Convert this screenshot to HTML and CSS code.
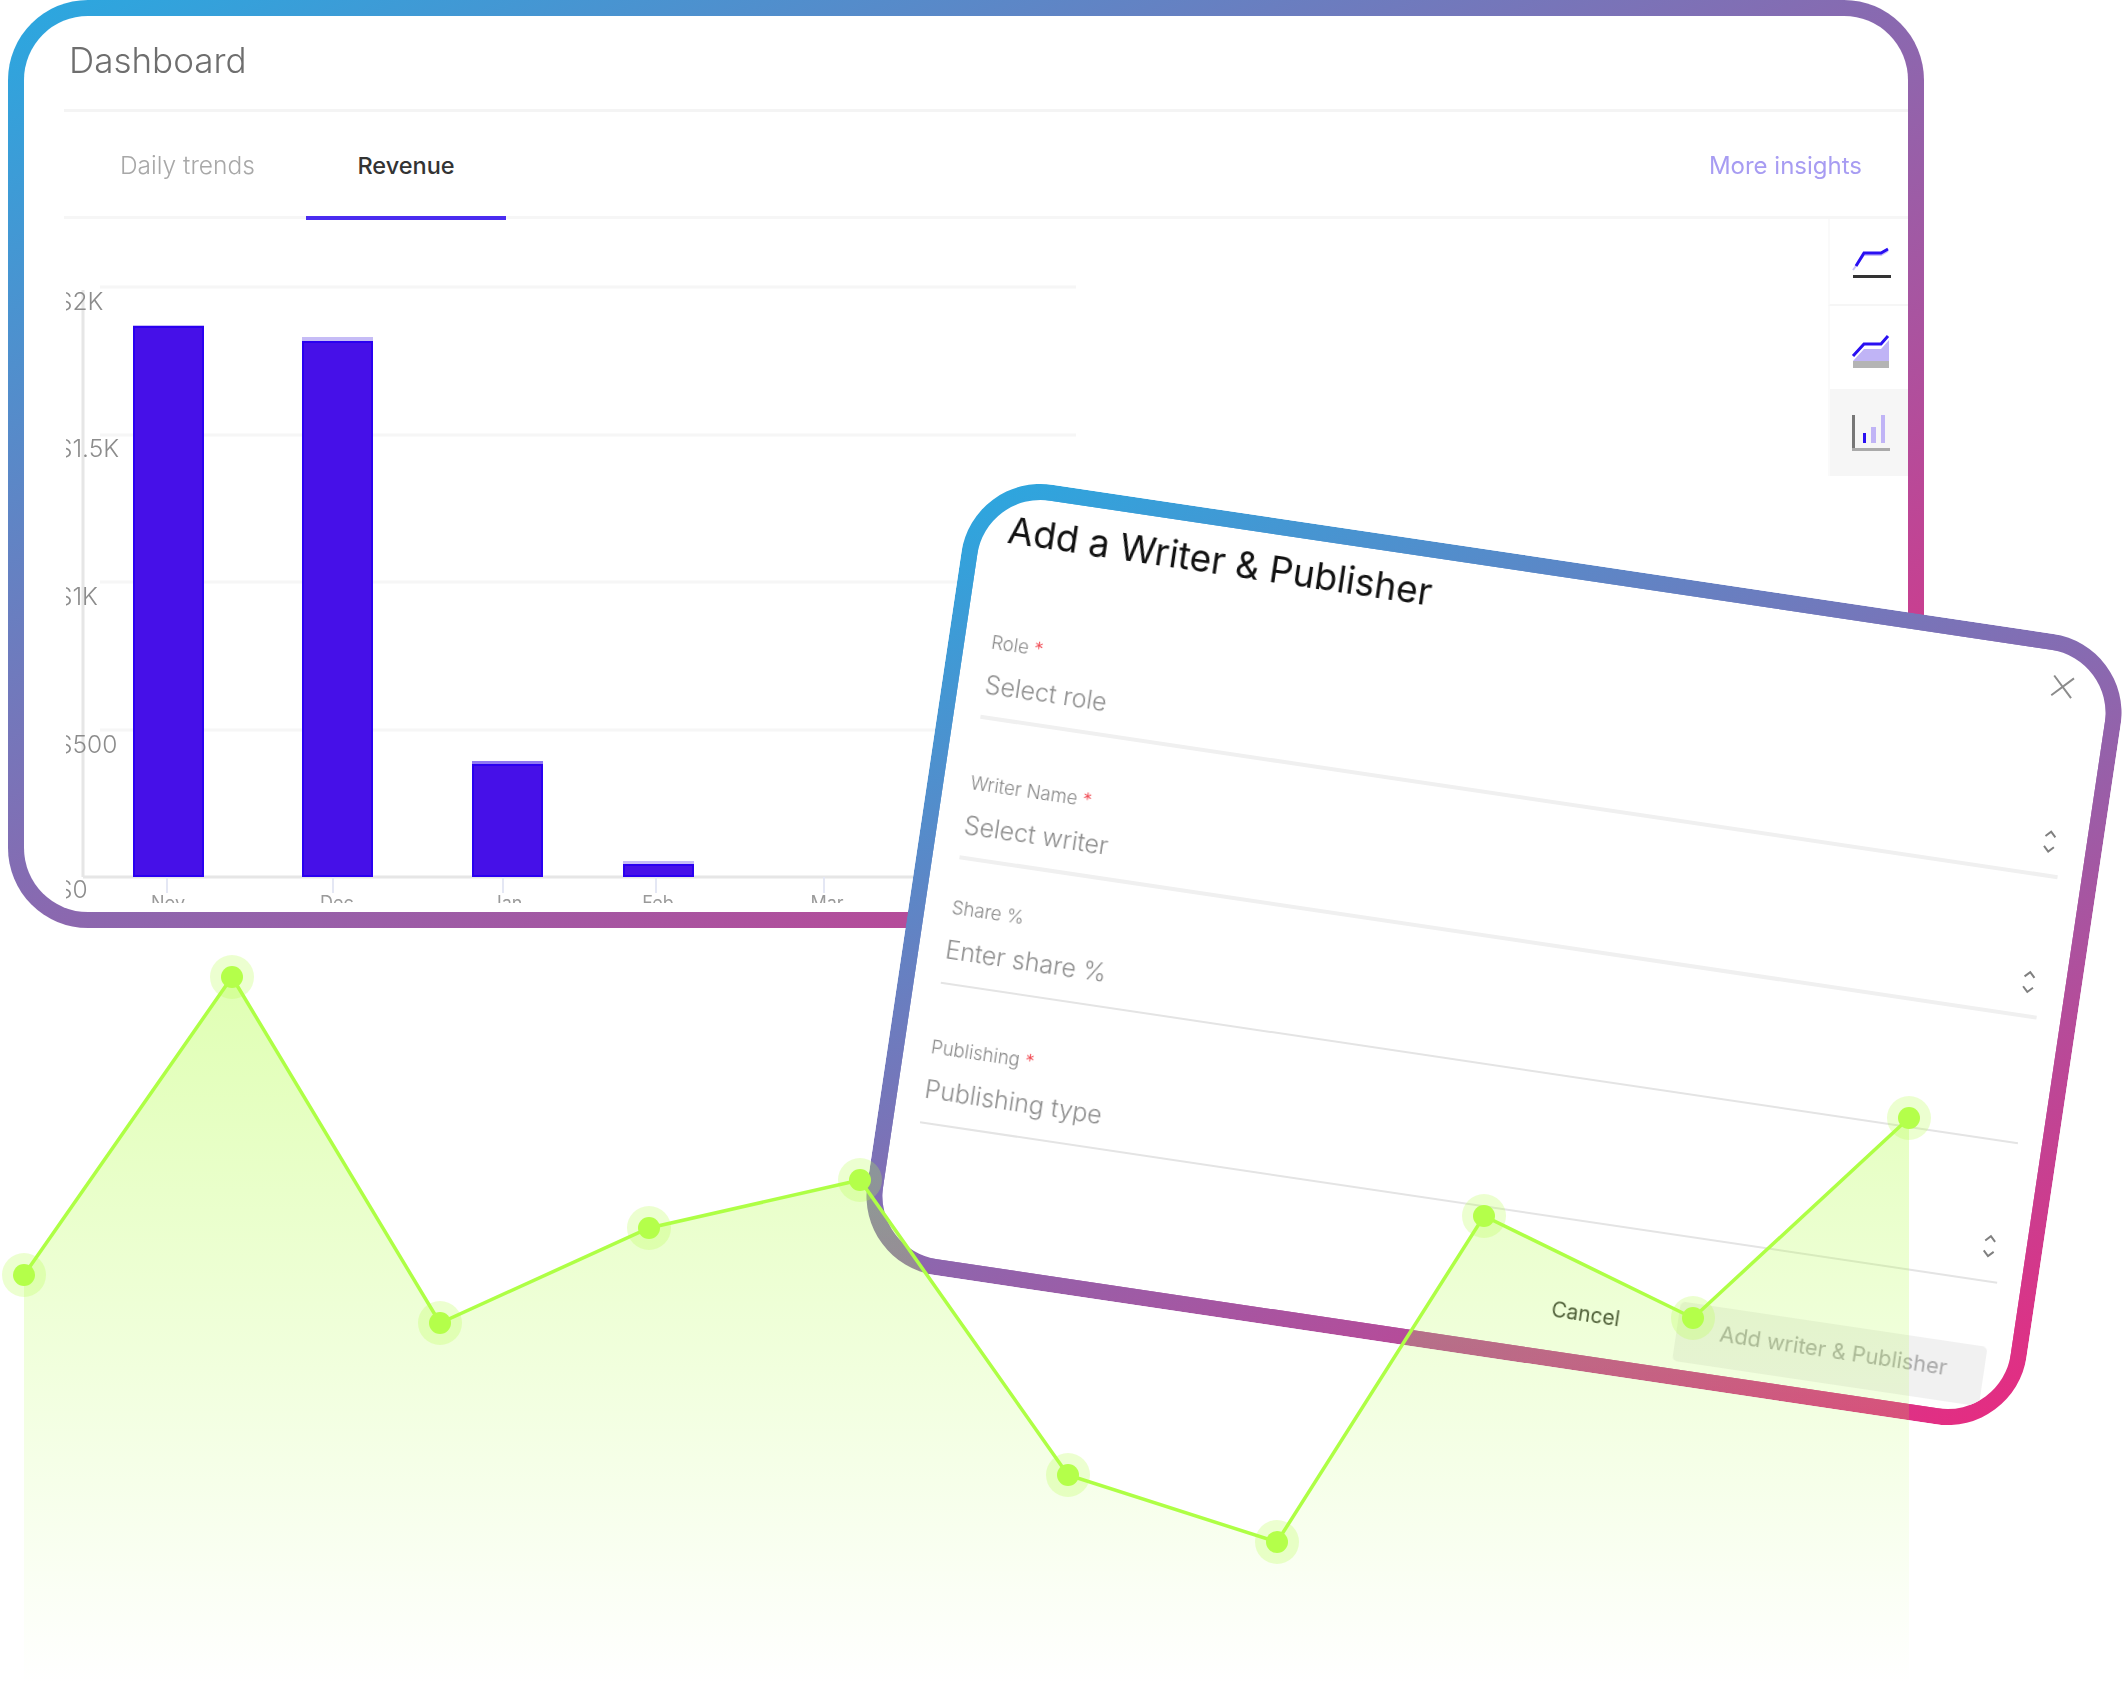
FILE: index.html
```html
<!DOCTYPE html>
<html lang="en">
<head>
<meta charset="utf-8">
<title>Dashboard</title>
<link rel="stylesheet" href="styles.css">
</head>
<body>
<main class="stage">
  <section class="card">
    <header class="card-head"><h1 class="card-title">Dashboard</h1></header>
    <nav class="tabs">
      <a class="tab tab-daily">Daily trends</a>
      <a class="tab tab-active">Revenue</a>
      <a class="tab-link">More insights</a>
    </nav>
    <div class="card-body">
      <svg class="chart" width="1804" height="693" viewBox="24 219 1804 693">
        <defs>
          <clipPath id="ylabels"><rect x="66" y="219" width="100" height="694"/></clipPath>
          <clipPath id="xlabels"><rect x="64" y="880" width="1100" height="23"/></clipPath>
        </defs>
        <g class="grid">
          <line x1="100" y1="287" x2="1076" y2="287"/>
          <line x1="100" y1="435" x2="1076" y2="435"/>
          <line x1="100" y1="582" x2="1076" y2="582"/>
          <line x1="100" y1="730" x2="1076" y2="730"/>
        </g>
        <line class="axis" x1="83" y1="290" x2="83" y2="877"/>
        <line class="axis" x1="83" y1="877" x2="1076" y2="877"/>
        <g class="ticks">
          <line x1="167" y1="877" x2="167" y2="893"/>
          <line x1="333" y1="877" x2="333" y2="893"/>
          <line x1="503" y1="877" x2="503" y2="893"/>
          <line x1="656" y1="877" x2="656" y2="893"/>
          <line x1="824" y1="877" x2="824" y2="893"/>
        </g>
        <g clip-path="url(#ylabels)" class="ylabel">
          <text x="57" y="310">$2K</text>
          <text x="57" y="457">$1.5K</text>
          <text x="57" y="605">$1K</text>
          <text x="57" y="753">$500</text>
          <text x="57" y="898">$0</text>
        </g>
        <g clip-path="url(#xlabels)" class="xlabel">
          <text x="168" y="909">Nov</text>
          <text x="337" y="909">Dec</text>
          <text x="507" y="909">Jan</text>
          <text x="658" y="909">Feb</text>
          <text x="827" y="909">Mar</text>
        </g>
        <rect class="bar-cap" x="133" y="325" width="71" height="10"/>
        <rect class="bar" x="134" y="327" width="69" height="549"/>
        <rect class="bar-cap" x="302" y="337" width="71" height="10"/>
        <rect class="bar" x="303" y="342" width="69" height="534"/>
        <rect class="bar-cap bar-cap-strong" x="472" y="761" width="71" height="10"/>
        <rect class="bar" x="473" y="765" width="69" height="111"/>
        <rect class="bar-cap" x="623" y="861" width="71" height="10"/>
        <rect class="bar" x="624" y="865" width="69" height="11"/>
      </svg>
      <aside class="rail">
        <div class="rail-item">
          <svg class="rail-icon" width="40" height="40" viewBox="0 0 40 40">
            <polyline class="ic-soft" points="2,28 13,13 30,13 37,9"/>
            <polyline class="ic-line" points="5,24 13,11 30,11 37,7"/>
            <rect class="ic-dark" x="2" y="33" width="38" height="3"/>
          </svg>
        </div>
        <div class="rail-item">
          <svg class="rail-icon" width="40" height="40" viewBox="0 0 40 40">
            <polygon class="ic-fill" points="2,33 13,21 30,21 38,12 38,33"/>
            <rect class="ic-grey" x="2" y="33" width="36" height="7"/>
            <polyline class="ic-line" points="2,28 13,16 30,16 37,8"/>
          </svg>
        </div>
        <div class="rail-item rail-item-active">
          <svg class="rail-icon" width="40" height="40" viewBox="0 0 40 40">
            <rect class="ic-axis" x="1" y="2" width="3" height="36"/>
            <rect class="ic-axis-light" x="1" y="35" width="38" height="3"/>
            <rect class="ic-blue" x="12" y="20" width="3" height="10"/>
            <rect class="ic-fill" x="20" y="14" width="5" height="16"/>
            <rect class="ic-fill" x="30" y="2" width="4" height="28"/>
          </svg>
        </div>
      </aside>
    </div>
  </section>

  <section class="modal">
    <header class="modal-head">
      <h2 class="modal-title">Add a Writer &amp; Publisher</h2>
      <svg class="modal-close" width="24" height="24" viewBox="0 0 24 24"><path d="M2 2 22 22M22 2 2 22"/></svg>
    </header>
    <div class="field field-role">
      <label class="field-label">Role <span class="req">*</span></label>
      <div class="field-row">
        <span class="field-value">Select role</span>
        <svg class="chevrons" width="14" height="26" viewBox="0 0 14 26"><path d="M2 8 7 3l5 5M2 18l5 5 5-5"/></svg>
      </div>
    </div>
    <div class="field field-writer">
      <label class="field-label">Writer Name <span class="req">*</span></label>
      <div class="field-row">
        <span class="field-value">Select writer</span>
        <svg class="chevrons" width="14" height="26" viewBox="0 0 14 26"><path d="M2 8 7 3l5 5M2 18l5 5 5-5"/></svg>
      </div>
    </div>
    <div class="field field-share field-thin">
      <label class="field-label">Share %</label>
      <div class="field-row"><span class="field-value">Enter share %</span></div>
    </div>
    <div class="field field-pub field-thin">
      <label class="field-label">Publishing <span class="req">*</span></label>
      <div class="field-row">
        <span class="field-value">Publishing type</span>
        <svg class="chevrons" width="14" height="26" viewBox="0 0 14 26"><path d="M2 8 7 3l5 5M2 18l5 5 5-5"/></svg>
      </div>
    </div>
    <footer class="modal-foot">
      <button class="btn-cancel">Cancel</button>
      <button class="btn-add">Add writer &amp; Publisher</button>
    </footer>
  </section>

  <svg class="trend" width="2123" height="1684" viewBox="0 0 2123 1684">
    <defs>
      <linearGradient id="trendFill" gradientUnits="userSpaceOnUse" x1="0" y1="976" x2="0" y2="1684">
        <stop offset="0" stop-color="#b4ff4a" stop-opacity="0.42"/>
        <stop offset="1" stop-color="#b4ff4a" stop-opacity="0"/>
      </linearGradient>
    </defs>
    <polygon fill="url(#trendFill)" points="24,1275 232,977 440,1323 649,1228 860,1180 1068,1475 1277,1542 1484,1216 1693,1318 1909,1118 1909,1684 24,1684"/>
    <polyline class="trend-line" points="24,1275 232,977 440,1323 649,1228 860,1180 1068,1475 1277,1542 1484,1216 1693,1318 1909,1118"/>
    <g class="halo">
      <circle cx="24" cy="1275" r="22"/><circle cx="232" cy="977" r="22"/><circle cx="440" cy="1323" r="22"/>
      <circle cx="649" cy="1228" r="22"/><circle cx="860" cy="1180" r="22"/><circle cx="1068" cy="1475" r="22"/>
      <circle cx="1277" cy="1542" r="22"/><circle cx="1484" cy="1216" r="22"/><circle cx="1693" cy="1318" r="22"/>
      <circle cx="1909" cy="1118" r="22"/>
    </g>
    <g class="dot">
      <circle cx="24" cy="1275" r="11"/><circle cx="232" cy="977" r="11"/><circle cx="440" cy="1323" r="11"/>
      <circle cx="649" cy="1228" r="11"/><circle cx="860" cy="1180" r="11"/><circle cx="1068" cy="1475" r="11"/>
      <circle cx="1277" cy="1542" r="11"/><circle cx="1484" cy="1216" r="11"/><circle cx="1693" cy="1318" r="11"/>
      <circle cx="1909" cy="1118" r="11"/>
    </g>
  </svg>
</main>
</body>
</html>
```

FILE: styles.css
```css
* { box-sizing: border-box; }
html, body { margin: 0; padding: 0; background: #fff; overflow: hidden; }
body { font-family: "Inter", "Liberation Sans", sans-serif; }

.stage {
  position: relative;
  width: 2123px;
  height: 1684px;
  overflow: hidden;
  background: #fff;
  padding-left: 8px;
}

/* Dashboard card */
.card {
  width: 1916px;
  height: 928px;
  border: 16px solid transparent;
  border-radius: 80px;
  background:
    linear-gradient(#fff, #fff) padding-box,
    linear-gradient(to bottom right, #2aa8e0, #e82a80) border-box;
  overflow: hidden;
  display: flex;
  flex-direction: column;
}
.card-head {
  flex: 0 0 96px;
  margin-left: 40px;
  padding-left: 5px;
  padding-top: 24px;
  border-bottom: 3px solid #f4f4f4;
}
.card-title {
  margin: 0;
  font-size: 35px;
  line-height: 40px;
  font-weight: 300;
  color: #6e6e6e;
  filter: blur(0.7px);
}
.tabs {
  flex: 0 0 107px;
  margin-left: 40px;
  display: flex;
  align-items: stretch;
  border-bottom: 3px solid #f6f6f6;
}
.tab {
  display: flex;
  align-items: center;
  font-size: 24.5px;
  color: #a8a8a8;
  filter: blur(0.6px);
  padding-top: 2px;
}
.tab-daily { width: 242px; padding-left: 56px; font-weight: 300; }
.tab-active {
  width: 200px;
  justify-content: center;
  color: #333;
  font-size: 23.5px;
  font-weight: 500;
  filter: none;
  box-shadow: 0 4px 0 #4a2cf0;
}
.tab-link {
  margin-left: auto;
  padding-right: 46px;
  align-self: center;
  font-size: 24px;
  color: #a79cf2;
  filter: blur(0.6px);
  margin-top: 2px;
}
.card-body { flex: 1; display: flex; min-height: 0; }

.chart { display: block; flex: 0 0 1804px; }
.grid line { stroke: #f6f6f6; stroke-width: 3; }
.axis { stroke: #e6e6e6; stroke-width: 3; }
.ticks line { stroke: #e4e7f4; stroke-width: 2; }
.ylabel text { font-size: 24.5px; font-weight: 300; fill: #8c8c8c; filter: blur(0.7px); }
.xlabel text { font-size: 18px; fill: #9a9a9a; text-anchor: middle; filter: blur(0.5px); }
.bar { fill: #4610e8; stroke: #2a00f0; stroke-width: 2; }
.bar-cap { fill: #c6bcf6; }
.bar-cap-strong { fill: #8f78f2; }

.rail { flex: 0 0 80px; align-self: flex-start; display: flex; flex-direction: column; }
.rail-item {
  height: 85px;
  display: flex;
  align-items: center;
  justify-content: center;
  padding-left: 4px;
  border-left: 2px solid #fafafa;
  border-bottom: 2px solid #f6f6f6;
}
.rail-item:first-child { height: 87px; }
.rail-item:nth-child(2) { height: 83px; border-bottom: 0; }
.rail-item-active { height: 87px; background: #f6f6f6; border-bottom: 0; }
.rail-icon { display: block; filter: blur(0.4px); }
.ic-line { fill: none; stroke: #2a10f2; stroke-width: 3; }
.ic-soft { fill: none; stroke: #c9c0f8; stroke-width: 2; }
.ic-dark { fill: #333; }
.ic-fill { fill: #c0b4f6; stroke: none; }
.ic-grey { fill: #b4b4b4; }
.ic-axis { fill: #777; }
.ic-axis-light { fill: #aaa; }
.ic-blue { fill: #2a10f2; }

/* Tilted modal */
.modal {
  position: absolute;
  left: 908px;
  top: 555px;
  width: 1172px;
  height: 799px;
  transform: rotate(8.47deg);
  border: 16px solid transparent;
  border-radius: 80px;
  background:
    linear-gradient(#fff, #fff) padding-box,
    linear-gradient(to bottom right, #2aa8e0, #e82a80) border-box;
  overflow: hidden;
  padding: 0 24px 0 27px;
}
.modal-head { display: flex; justify-content: space-between; align-items: flex-start; height: 54px; }
.modal-title {
  margin: 13px 0 0;
  font-size: 37.2px;
  line-height: 44px;
  font-weight: 400;
  color: #111;
  filter: blur(0.3px);
}
.modal-close { margin: 23px 11px 0 0; }
.modal-close path { fill: none; stroke: #8c8c8c; stroke-width: 2; }

.field { display: flex; flex-direction: column; justify-content: flex-end; border-bottom: 4px solid #f0f0f0; }
.field-thin { border-bottom: 2px solid #e4e4e4; padding-bottom: 2px; }
.field-role { height: 172px; }
.field-writer { height: 142px; }
.field-share { height: 126px; }
.field-pub { height: 141px; }
.field-label { font-size: 18.6px; line-height: 24px; font-weight: 300; color: #8a8a8a; margin-bottom: 16px; filter: blur(0.3px); }
.req { color: #f0404a; }
.field-row { display: flex; justify-content: space-between; align-items: center; height: 30px; margin-bottom: 16px; }
.field-value { font-size: 25px; line-height: 30px; font-weight: 300; color: #8e8e8e; filter: blur(0.3px); }
.chevrons { margin: 0 6px 2px 0; }
.chevrons path { fill: none; stroke: #808080; stroke-width: 2; }

.modal-foot { display: flex; justify-content: flex-end; align-items: center; gap: 58px; margin-top: 64px; }
.btn-cancel, .btn-add {
  border: 0;
  padding: 0;
  font-family: inherit;
  background: none;
  font-size: 21px;
}
.btn-cancel { color: #333; font-weight: 400; filter: blur(0.3px); margin-bottom: 8px; }
.btn-add {
  width: 310px;
  height: 60px;
  background: #f1f1f1;
  color: #a9a9a9;
  font-size: 21.8px;
  border-radius: 5px;
  padding: 0 0 8px 6px;
  filter: blur(0.3px);
}

/* Trend overlay */
.trend { position: absolute; left: 0; top: 0; display: block; pointer-events: none; }
.trend-line { fill: none; stroke: #aeff45; stroke-width: 3.5; }
.halo circle { fill: #b4ff4a; fill-opacity: 0.26; }
.dot circle { fill: #b4ff4a; }
```
